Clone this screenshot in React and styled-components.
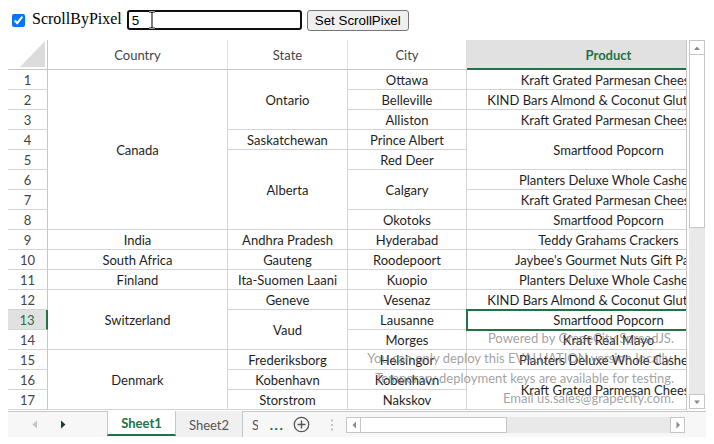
import React from 'react';
import styled, { createGlobalStyle } from 'styled-components';

const GREEN = '#217346';
const GRID = '#d4d4d4';
const HEAD_LINE = '#c6c6c6';
const CELL_FONT = 'Lato, "Open Sans", "Liberation Sans", sans-serif';

const Global = createGlobalStyle`
  html, body { background: #ffffff; }
  body { margin: 8px; font-family: "Liberation Serif", serif; }
  * { box-sizing: border-box; }
`;

const Toolbar = styled.div`
  display: flex;
  align-items: center;
  height: 22px;
  margin-bottom: 10px;
  font-family: "Liberation Serif", serif;
  font-size: 16px;
  color: #000;
`;

const Check = styled.input`
  width: 13px;
  height: 13px;
  margin: 2px 4px 0 4px;
  accent-color: #0075ff;
`;

const Label = styled.span`
  margin-left: 3px;
  margin-right: 5px;
`;

const InputWrap = styled.div`
  position: relative;
  display: flex;
`;

const TextInput = styled.input`
  width: 175px;
  height: 20px;
  margin-top: 2px;
  padding: 0 3px;
  border: 2px solid #101010;
  border-radius: 3px;
  font-family: "Liberation Sans", Arial, sans-serif;
  font-size: 13.33px;
  color: #000;
  outline: none;
`;

const Cursor = styled.svg`
  position: absolute;
  left: 21px;
  top: 3px;
`;

const Button = styled.button`
  margin-left: 5px;
  margin-top: 2px;
  width: 102px;
  height: 21px;
  padding: 0;
  background: #efefef;
  border: 1px solid #767676;
  border-radius: 3px;
  font-family: "Liberation Sans", Arial, sans-serif;
  font-size: 13.33px;
  color: #000;
`;

const Workbook = styled.div`
  width: 698px;
  display: flex;
  flex-direction: column;
`;

const Main = styled.div`
  display: flex;
  height: 370px;
`;

const Viewport = styled.div`
  position: relative;
  width: 679px;
  height: 370px;
  overflow: hidden;
  border-right: 1px solid ${HEAD_LINE};
`;

const Grid = styled.div`
  display: grid;
  grid-template-columns: 40px 180px 120px 119px 284px;
  grid-template-rows: 30px repeat(17, 20px);
  font-family: ${CELL_FONT};
  font-size: 13px;
`;

const Cell = styled.div`
  display: flex;
  align-items: center;
  justify-content: center;
  white-space: nowrap;
  color: #1e1e1e;
  background: #fff;
  border-right: 1px solid ${GRID};
  border-bottom: 1px solid ${GRID};
  position: ${(p) => (p.$selected ? 'relative' : 'static')};
  z-index: ${(p) => (p.$selected ? 2 : 'auto')};
  outline: ${(p) => (p.$selected ? `2px solid ${GREEN}` : 'none')};
  outline-offset: -1px;
  overflow: ${(p) => (p.$selected ? 'visible' : 'hidden')};
`;

const ColHead = styled.div`
  display: flex;
  align-items: center;
  justify-content: center;
  white-space: nowrap;
  color: ${(p) => (p.$active ? GREEN : '#444')};
  font-weight: ${(p) => (p.$active ? 700 : 400)};
  background: ${(p) => (p.$active ? '#e1e1e1' : '#fff')};
  border-right: 1px solid #e0e0e0;
  border-bottom: ${(p) => (p.$active ? `2px solid ${GREEN}` : `1px solid ${HEAD_LINE}`)};
  padding-top: ${(p) => (p.$active ? '1px' : '0')};
`;

const Corner = styled.div`
  display: flex;
  align-items: flex-end;
  justify-content: flex-end;
  padding: 0 2px 2px 0;
  background: #fff;
  border-right: 1px solid ${HEAD_LINE};
  border-bottom: 1px solid ${HEAD_LINE};
`;

const RowHead = styled.div`
  display: flex;
  align-items: center;
  justify-content: center;
  color: ${(p) => (p.$active ? GREEN : '#444')};
  background: ${(p) => (p.$active ? '#e1e1e1' : '#fff')};
  border-bottom: 1px solid ${GRID};
  border-right: ${(p) => (p.$active ? `2px solid ${GREEN}` : `1px solid ${HEAD_LINE}`)};
`;

const Watermark = styled.div`
  position: absolute;
  right: 12px;
  top: 288px;
  text-align: right;
  font-family: ${CELL_FONT};
  font-size: 13px;
  line-height: 20px;
  color: rgba(120, 120, 120, 0.7);
  pointer-events: none;
  z-index: 3;
`;

const VScroll = styled.div`
  width: 19px;
  display: flex;
  flex-direction: column;
  padding: 0 1px 1px 2px;
  background: #fff;
`;

const ArrowBox = styled.div`
  flex: none;
  width: ${(p) => (p.$h ? '15px' : '100%')};
  height: ${(p) => (p.$h ? '16px' : '15px')};
  display: flex;
  align-items: center;
  justify-content: center;
  border: 1px solid ${HEAD_LINE};
  background: #fff;
`;

const VTrack = styled.div`
  flex: 1;
  display: flex;
  flex-direction: column;
  background: #e9e9e9;
  border-left: 1px solid #e9e9e9;
`;

const VThumb = styled.div`
  height: 173px;
  background: #fff;
  border: 1px solid ${HEAD_LINE};
  border-top: none;
  margin-left: -1px;
`;

const TabBar = styled.div`
  display: flex;
  align-items: stretch;
  height: 26px;
  margin-top: 1px;
  border-top: 1px solid ${HEAD_LINE};
  background: #f7f7f7;
  font-family: ${CELL_FONT};
  font-size: 13px;
`;

const Nav = styled.div`
  width: 99px;
  display: flex;
  align-items: center;
  padding-left: 24px;
  gap: 22px;
`;

const Tab = styled.div`
  width: ${(p) => (p.$active ? '69px' : '67px')};
  display: flex;
  align-items: center;
  justify-content: center;
  margin-top: -1px;
  padding-top: 1px;
  color: ${(p) => (p.$active ? GREEN : '#555')};
  font-weight: ${(p) => (p.$active ? 700 : 400)};
  background: ${(p) => (p.$active ? '#fff' : '#f0f0f0')};
  border-left: ${(p) => (p.$active ? `1px solid ${HEAD_LINE}` : 'none')};
  border-right: 1px solid ${HEAD_LINE};
  border-bottom: ${(p) => (p.$active ? `2px solid ${GREEN}` : 'none')};
  margin-bottom: ${(p) => (p.$active ? '1px' : '0')};
`;

const ClippedTab = styled.div`
  width: 15px;
  overflow: hidden;
  display: flex;
  align-items: center;
  padding-left: 9px;
  color: #555;
  white-space: nowrap;
`;

const More = styled.div`
  width: 20px;
  display: flex;
  align-items: center;
  justify-content: center;
  margin-left: 9px;
  color: ${GREEN};
  font-weight: 900;
  font-size: 14px;
  letter-spacing: 1.5px;
`;

const IconSlot = styled.div`
  display: flex;
  align-items: center;
  margin-left: ${(p) => p.$ml}px;
`;

const HScroll = styled.div`
  display: flex;
  align-self: center;
  margin-left: 12px;
  margin-top: 1px;
  width: 339px;
  height: 16px;
`;

const HThumb = styled.div`
  width: 146px;
  height: 16px;
  background: #fff;
  border: 1px solid ${HEAD_LINE};
  border-left: none;
`;

const HTrack = styled.div`
  flex: 1;
  background: #e9e9e9;
`;

const countries = [['Canada', 8], ['India', 1], ['South Africa', 1], ['Finland', 1], ['Switzerland', 3], ['Denmark', 3]];
const states = [['Ontario', 3], ['Saskatchewan', 1], ['Alberta', 4], ['Andhra Pradesh', 1], ['Gauteng', 1], ['Ita-Suomen Laani', 1], ['Geneve', 1], ['Vaud', 2], ['Frederiksborg', 1], ['Kobenhavn', 1], ['Storstrom', 1]];
const cities = [['Ottawa', 1], ['Belleville', 1], ['Alliston', 1], ['Prince Albert', 1], ['Red Deer', 1], ['Calgary', 2], ['Okotoks', 1], ['Hyderabad', 1], ['Roodepoort', 1], ['Kuopio', 1], ['Vesenaz', 1], ['Lausanne', 1], ['Morges', 1], ['Helsingor', 1], ['Kobenhavn', 1], ['Nakskov', 1]];
const products = [
  ['Kraft Grated Parmesan Cheese', 1],
  ['KIND Bars Almond & Coconut Gluten Free', 1],
  ['Kraft Grated Parmesan Cheese', 1],
  ['Smartfood Popcorn', 2],
  ['Planters Deluxe Whole Cashew', 1],
  ['Kraft Grated Parmesan Cheese', 1],
  ['Smartfood Popcorn', 1],
  ['Teddy Grahams Crackers', 1],
  ["Jaybee's Gourmet Nuts Gift Pack", 1],
  ['Planters Deluxe Whole Cashew', 1],
  ['KIND Bars Almond & Coconut Gluten Free', 1],
  ['Smartfood Popcorn', 1],
  ['Kraft Real Mayo', 1],
  ['Planters Deluxe Whole Cashew', 1],
  ['Kraft Grated Parmesan Cheese', 2],
];

function Column({ items, col, selectedRow }) {
  let row = 1;
  return items.map(([text, span], i) => {
    const start = row;
    row += span;
    return (
      <Cell
        key={col + '-' + i}
        $selected={selectedRow === start}
        style={{ gridColumn: col + 1, gridRow: `${start + 1} / span ${span}` }}
      >
        {text}
      </Cell>
    );
  });
}

const Tri = ({ dir, color }) => (
  <svg width="6" height="9" viewBox="0 0 6 9">
    {dir === 'left' ? (
      <polygon points="5,0.5 5,8.5 0.5,4.5" fill={color} />
    ) : (
      <polygon points="1,0.5 1,8.5 5.5,4.5" fill={color} />
    )}
  </svg>
);

const SmallArrow = ({ dir }) => {
  const pts = {
    up: '1,5 7,5 4,1.5',
    down: '1,1.5 7,1.5 4,5',
    left: '5,0.5 5,7.5 1.5,4',
    right: '1.5,0.5 1.5,7.5 5,4',
  }[dir];
  const vert = dir === 'up' || dir === 'down';
  return (
    <svg width={vert ? 8 : 6} height={vert ? 6 : 8} viewBox={vert ? '0 0 8 6' : '0 0 6 8'}>
      <polygon points={pts} fill="#8a8a8a" />
    </svg>
  );
};

export default function App() {
  const rows = Array.from({ length: 17 }, (_, i) => i + 1);
  return (
    <>
      <Global />
      <Toolbar>
        <Check type="checkbox" checked readOnly />
        <Label>ScrollByPixel</Label>
        <InputWrap>
          <TextInput type="text" value="5" readOnly />
          <Cursor width="8" height="18" viewBox="0 0 8 18">
            <path d="M1 1 H3 Q4 1 4 2.5 V15.5 Q4 17 3 17 H1 M7 1 H5 Q4 1 4 2.5 M4 15.5 Q4 17 5 17 H7" fill="none" stroke="#fff" strokeWidth="2.6" />
            <path d="M1 1 H3 Q4 1 4 2.5 V15.5 Q4 17 3 17 H1 M7 1 H5 Q4 1 4 2.5 M4 15.5 Q4 17 5 17 H7" fill="none" stroke="#111" strokeWidth="1.1" />
          </Cursor>
        </InputWrap>
        <Button type="button">Set ScrollPixel</Button>
      </Toolbar>

      <Workbook>
        <Main>
          <Viewport>
            <Grid>
              <Corner>
                <svg width="25" height="26" viewBox="0 0 25 26">
                  <polygon points="25,0 25,26 0,26" fill="#dcdcdc" />
                </svg>
              </Corner>
              <ColHead>Country</ColHead>
              <ColHead>State</ColHead>
              <ColHead>City</ColHead>
              <ColHead $active>Product</ColHead>
              {rows.map((r) => (
                <RowHead key={r} $active={r === 13} style={{ gridColumn: 1, gridRow: r + 1 }}>
                  {r}
                </RowHead>
              ))}
              <Column items={countries} col={1} />
              <Column items={states} col={2} />
              <Column items={cities} col={3} />
              <Column items={products} col={4} selectedRow={13} />
            </Grid>
            <Watermark>
              <div>Powered by GrapeCity SpreadJS.</div>
              <div>You can only deploy this EVALUATION version locally.</div>
              <div>Temporary deployment keys are available for testing.</div>
              <div>Email us.sales@grapecity.com.</div>
            </Watermark>
          </Viewport>
          <VScroll>
            <ArrowBox>
              <SmallArrow dir="up" />
            </ArrowBox>
            <VTrack>
              <VThumb />
            </VTrack>
            <ArrowBox>
              <SmallArrow dir="down" />
            </ArrowBox>
          </VScroll>
        </Main>

        <TabBar>
          <Nav>
            <Tri dir="left" color="#c4c4c4" />
            <Tri dir="right" color="#1f3d2e" />
          </Nav>
          <Tab $active>Sheet1</Tab>
          <Tab>Sheet2</Tab>
          <ClippedTab>Sheet3</ClippedTab>
          <More>...</More>
          <IconSlot $ml={6}>
            <svg width="17" height="17" viewBox="0 0 17 17">
              <circle cx="8.5" cy="8.5" r="7.2" fill="none" stroke="#555" strokeWidth="1.3" />
              <path d="M8.5 4.5 V12.5 M4.5 8.5 H12.5" stroke="#555" strokeWidth="1.4" />
            </svg>
          </IconSlot>
          <IconSlot $ml={20}>
            <svg width="4" height="14" viewBox="0 0 4 14">
              <circle cx="2" cy="2.5" r="1.1" fill="#b8b8b8" />
              <circle cx="2" cy="7" r="1.1" fill="#b8b8b8" />
              <circle cx="2" cy="11.5" r="1.1" fill="#b8b8b8" />
            </svg>
          </IconSlot>
          <HScroll>
            <ArrowBox $h>
              <SmallArrow dir="left" />
            </ArrowBox>
            <HThumb />
            <HTrack />
            <ArrowBox $h>
              <SmallArrow dir="right" />
            </ArrowBox>
          </HScroll>
        </TabBar>
      </Workbook>
    </>
  );
}
